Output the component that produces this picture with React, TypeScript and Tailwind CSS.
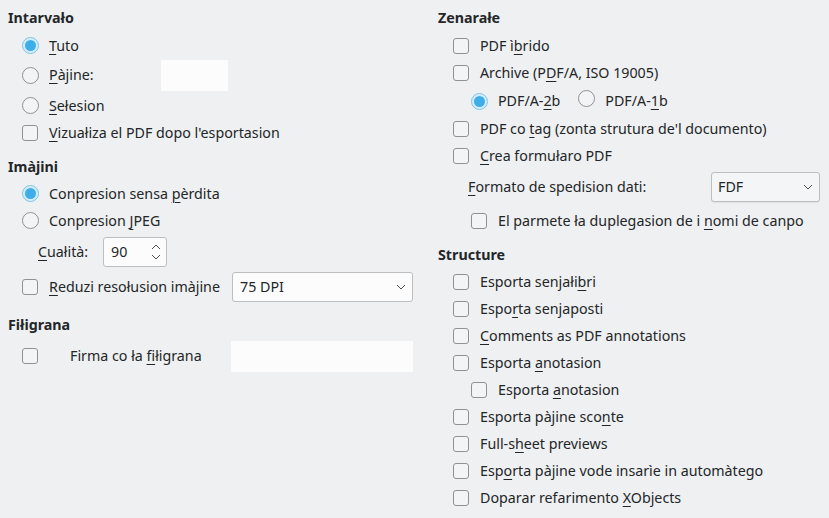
import type { ReactNode } from 'react';

const U = ({ children }: { children: ReactNode }) => (
  <span className="underline decoration-1 underline-offset-[3px]">{children}</span>
);

function Box() {
  return <span className="inline-block w-[16px] h-[16px] shrink-0 rounded-[3px] border border-[#8f9194] bg-[#f3f4f5]" />;
}

function Dot({ on }: { on?: boolean }) {
  if (on)
    return (
      <span className="flex items-center justify-center w-[17px] h-[17px] shrink-0 rounded-full border border-[#7cc4ee] bg-[#d6ecf9]">
        <span className="block w-[11px] h-[11px] rounded-full bg-[#3daee9]" />
      </span>
    );
  return <span className="inline-block w-[17px] h-[17px] shrink-0 rounded-full border border-[#8f9194] bg-[#f3f4f5]" />;
}

function Row({ h, className = '', children }: { h: string; className?: string; children: ReactNode }) {
  return <div className={`flex items-center ${h} ${className}`}>{children}</div>;
}

function Chevron() {
  return (
    <svg width="10" height="6" viewBox="0 0 10 6" className="shrink-0">
      <path d="M1 1l4 4 4-4" fill="none" stroke="#4d4f52" strokeWidth="1" />
    </svg>
  );
}

export default function App() {
  return (
    <div
      className="flex w-[829px] h-[518px] bg-[#eff0f1] text-[#232629] text-[14.25px] overflow-hidden"
      style={{ fontFamily: '"Noto Sans", "Open Sans", sans-serif' }}
    >
      {/* left column */}
      <div className="w-[438px] pl-[8px] pt-[4px] flex flex-col">
        <Row h="h-[28px]"><span className="font-bold">Intarvało</span></Row>
        <Row h="h-[27px]" className="pl-[14px] gap-[10px]"><Dot on /><span><U>T</U>uto</span></Row>
        <Row h="h-[32px]" className="pl-[14px]">
          <Dot />
          <span className="ml-[10px] w-[112px]"><U>P</U>àjine:</span>
          <span className="block w-[67px] h-[31px] bg-[#fcfcfc]" />
        </Row>
        <Row h="h-[29px]" className="pl-[14px] gap-[10px]"><Dot /><span><U>S</U>ełesion</span></Row>
        <Row h="h-[26px]" className="pl-[14px] gap-[11px]"><Box /><span><U>V</U>izuałiza el PDF dopo l'esportasion</span></Row>

        <Row h="h-[26px]" className="mt-[8px]"><span className="font-bold">Imàjini</span></Row>
        <Row h="h-[27px]" className="pl-[14px] gap-[10px]"><Dot on /><span>Conpresion sensa <U>p</U>èrdita</span></Row>
        <Row h="h-[27px]" className="pl-[14px] gap-[10px]"><Dot /><span>Conpresion <U>J</U>PEG</span></Row>
        <Row h="h-[36px]" className="pl-[30px]">
          <span className="w-[65px]"><U>C</U>uałità:</span>
          <div className="flex items-center justify-between w-[64px] h-[30px] rounded-[3px] border border-[#bcbec0] bg-[#fcfcfc] pl-[7px] pr-[5px]">
            <span>90</span>
            <svg width="10" height="18" viewBox="0 0 10 18">
              <path d="M1 6l4-4 4 4M1 12l4 4 4-4" fill="none" stroke="#4d4f52" strokeWidth="1" />
            </svg>
          </div>
        </Row>
        <Row h="h-[34px]" className="pl-[14px]">
          <Box />
          <span className="ml-[11px] w-[183px]"><U>R</U>eduzi resołusion imàjine</span>
          <div className="flex items-center justify-between w-[181px] h-[30px] rounded-[3px] border border-[#bcbec0] bg-[#fcfcfc] pl-[7px] pr-[6px]">
            <span>75 DPI</span>
            <Chevron />
          </div>
        </Row>

        <Row h="h-[26px]" className="mt-[8px]"><span className="font-bold">Fiłigrana</span></Row>
        <Row h="h-[36px]" className="pl-[14px]">
          <Box />
          <span className="ml-[32px] w-[161px]">Firma co ła <U>fi</U>łigrana</span>
          <span className="block w-[182px] h-[31px] bg-[#fcfcfc]" />
        </Row>
      </div>

      {/* right column */}
      <div className="flex-1 pt-[4px] flex flex-col">
        <Row h="h-[28px]"><span className="font-bold">Zenarałe</span></Row>
        <Row h="h-[27px]" className="pl-[15px] gap-[11px]"><Box /><span>PDF ì<U>b</U>rido</span></Row>
        <Row h="h-[28px]" className="pl-[15px] gap-[11px]"><Box /><span>Archive (P<U>D</U>F/A, ISO 19005)</span></Row>
        <Row h="h-[28px]" className="pl-[33px]">
          <Dot on />
          <span className="ml-[10px]">PDF/A-<U>2</U>b</span>
          <span className="ml-[18px]"><Dot /></span>
          <span className="ml-[10px]">PDF/A-<U>1</U>b</span>
        </Row>
        <Row h="h-[27px]" className="pl-[15px] gap-[11px]"><Box /><span>PDF co <U>t</U>ag (zonta strutura de'l documento)</span></Row>
        <Row h="h-[27px]" className="pl-[15px] gap-[11px]"><Box /><span><U>C</U>rea formułaro PDF</span></Row>
        <Row h="h-[36px]" className="pl-[30px]">
          <span className="w-[243px]"><U>F</U>ormato de spedision dati:</span>
          <div className="flex items-center justify-between w-[109px] h-[30px] rounded-[3px] border border-[#bcbec0] bg-[#f4f5f6] pl-[6px] pr-[6px] shadow-[0_1px_1px_rgba(0,0,0,0.06)]">
            <span>FDF</span>
            <Chevron />
          </div>
        </Row>
        <Row h="h-[32px]" className="pl-[33px] gap-[11px]"><Box /><span>El parmete ła duplegasion de i <U>n</U>omi de canpo</span></Row>

        <Row h="h-[26px]" className="mt-[5px]"><span className="font-bold">Structure</span></Row>
        <Row h="h-[27px]" className="pl-[15px] gap-[11px]"><Box /><span>Esporta senjałi<U>b</U>ri</span></Row>
        <Row h="h-[27px]" className="pl-[15px] gap-[11px]"><Box /><span>Espo<U>r</U>ta senjaposti</span></Row>
        <Row h="h-[27px]" className="pl-[15px] gap-[11px]"><Box /><span><U>C</U>omments as PDF annotations</span></Row>
        <Row h="h-[27px]" className="pl-[15px] gap-[11px]"><Box /><span>Esporta <U>a</U>notasion</span></Row>
        <Row h="h-[27px]" className="pl-[33px] gap-[11px]"><Box /><span>Esporta <U>a</U>notasion</span></Row>
        <Row h="h-[27px]" className="pl-[15px] gap-[11px]"><Box /><span>Esporta pàjine sco<U>n</U>te</span></Row>
        <Row h="h-[27px]" className="pl-[15px] gap-[11px]"><Box /><span>Full-s<U>h</U>eet previews</span></Row>
        <Row h="h-[27px]" className="pl-[15px] gap-[11px]"><Box /><span>Esp<U>o</U>rta pàjine vode insarìe in automàtego</span></Row>
        <Row h="h-[27px]" className="pl-[15px] gap-[11px]"><Box /><span>Doparar refarimento <U>X</U>Objects</span></Row>
      </div>
    </div>
  );
}
